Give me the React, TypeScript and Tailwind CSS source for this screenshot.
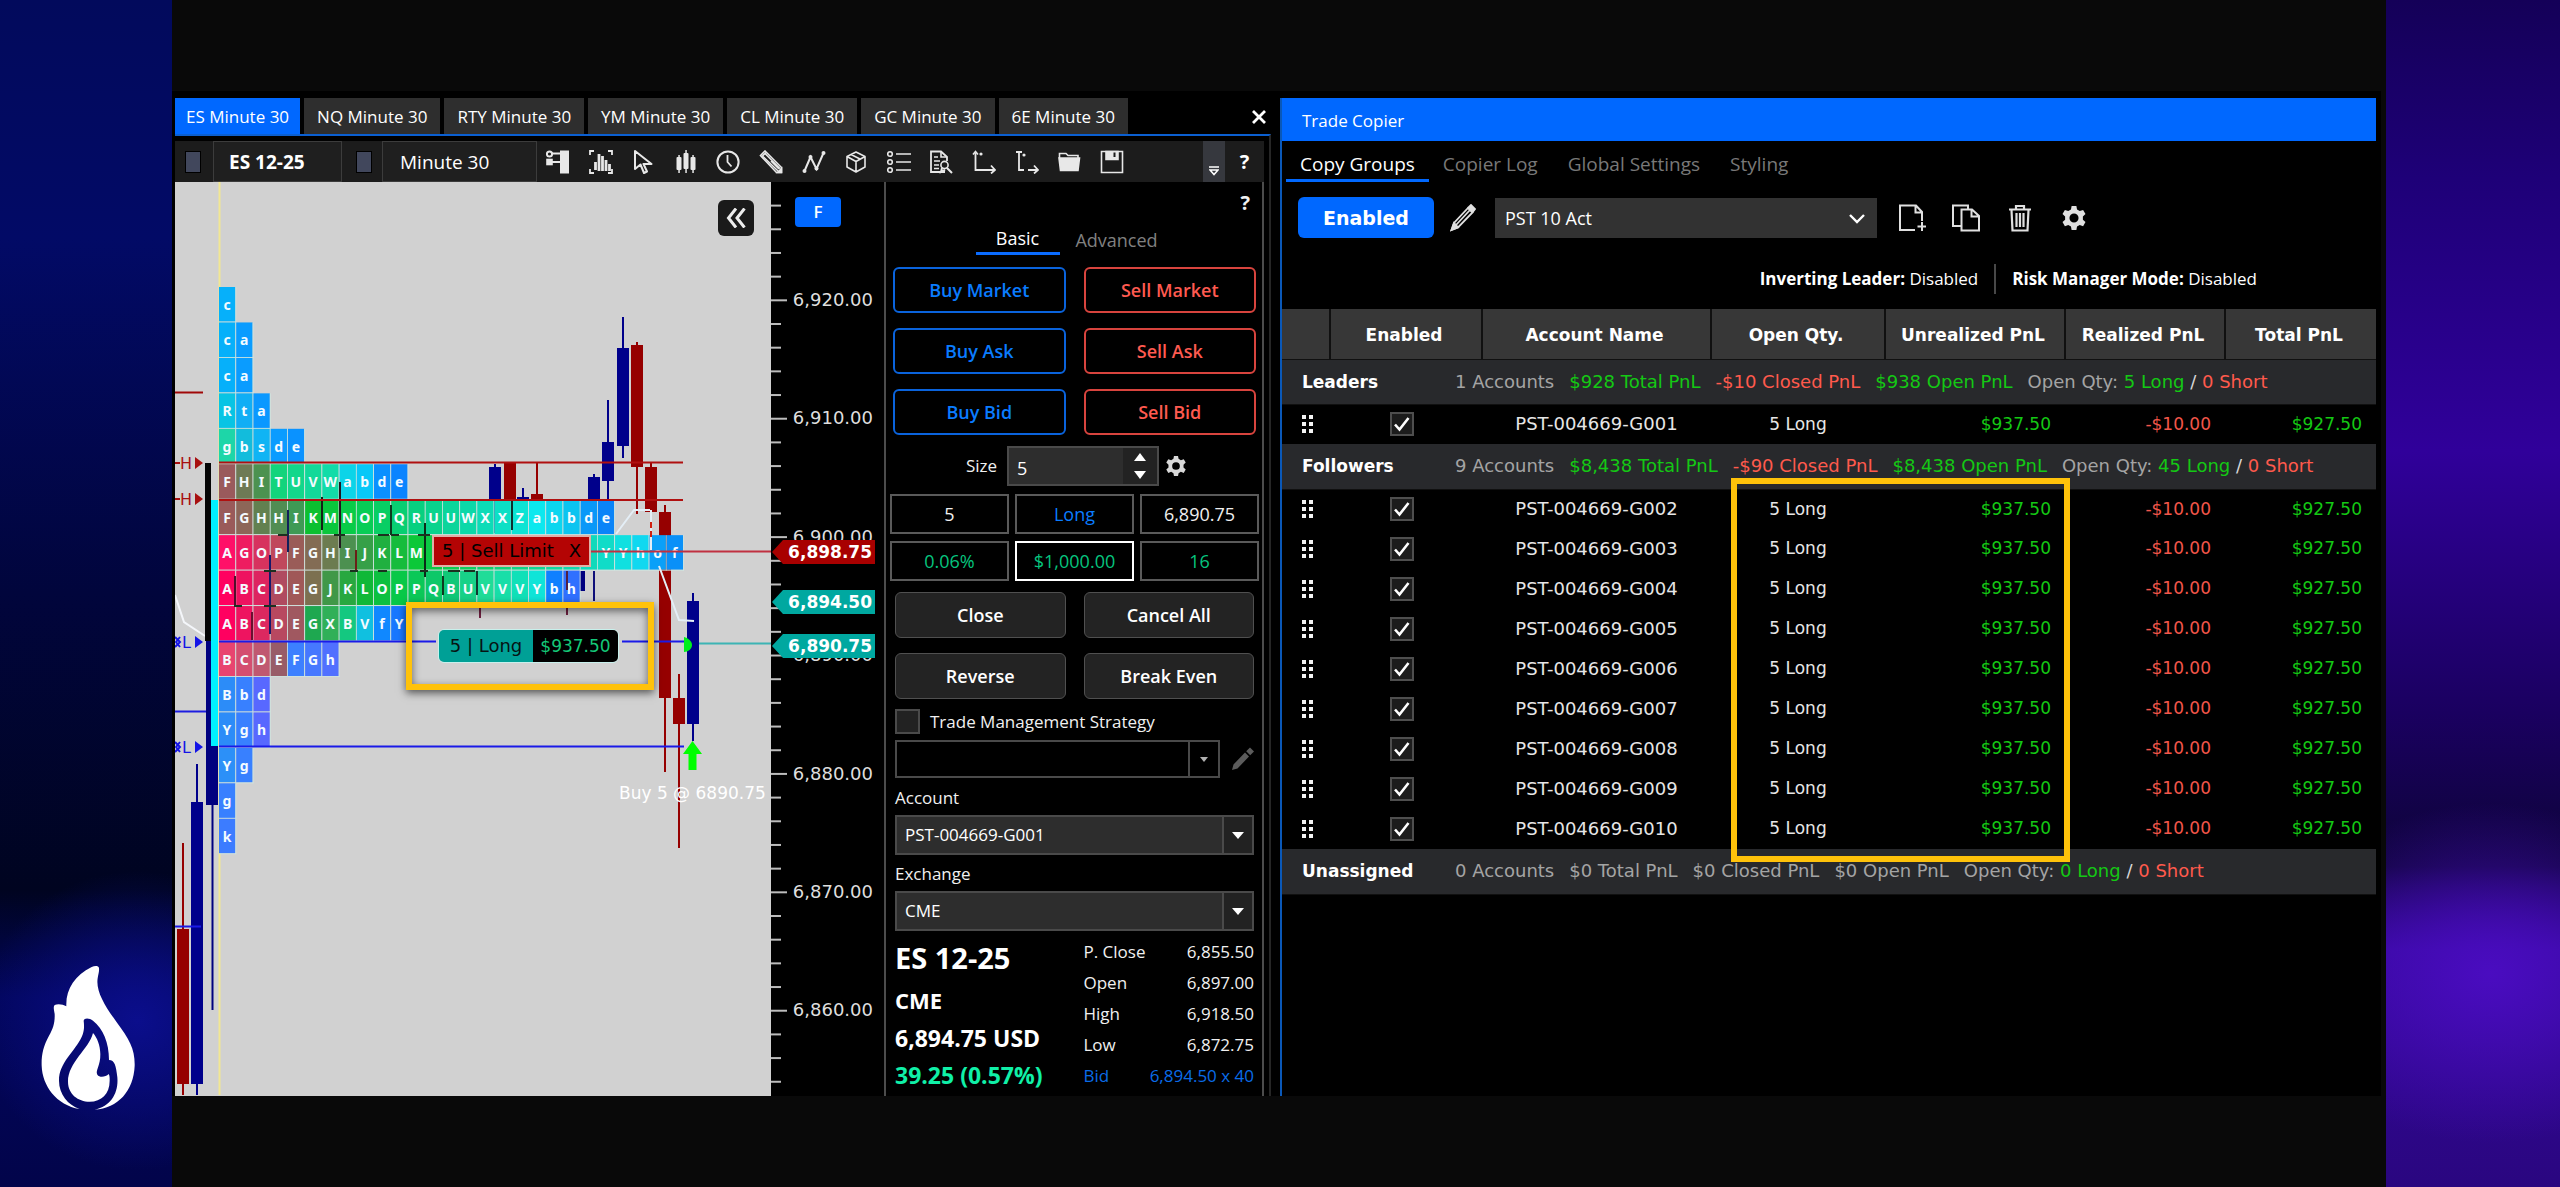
import type { ReactNode } from "react";

const TABS = ["ES Minute 30", "NQ Minute 30", "RTY Minute 30", "YM Minute 30", "CL Minute 30", "GC Minute 30", "6E Minute 30"];

/* ---------- market profile data ---------- */

type Row = { letters: string; stops: [number, string][] };

/* A blank in a row is a period whose letter the order label covers. */
const PROFILE: Row[] = [
  { letters: "c", stops: [[0, "#06b0fa"]] },
  { letters: "ca", stops: [[0, "#06b0fa"], [1, "#0a9cff"]] },
  { letters: "ca", stops: [[0, "#06b0fa"], [1, "#0a9cff"]] },
  { letters: "Rta", stops: [[0, "#08c4e4"], [1, "#10aef5"], [2, "#0a98ff"]] },
  { letters: "gbsde", stops: [[0, "#1dd6a8"], [1, "#12bcdc"], [2, "#10b4f4"], [3, "#0a9cff"], [4, "#0a92ff"]] },
  { letters: "FHITUVWabde", stops: [[0, "#9a5a5c"], [1, "#6e7a55"], [2, "#4c9250"], [3, "#12d47c"], [6, "#12dca8"], [7, "#0cd4e8"], [8, "#08c8f8"], [9, "#0a90ff"], [10, "#0a84ff"]] },
  { letters: "FGHHIKMNOPQRUUWXXZabbde", stops: [[0, "#9a5a5a"], [1, "#8d6658"], [2, "#628050"], [4, "#3f9a55"], [5, "#0cc030"], [7, "#08cc48"], [11, "#08d080"], [14, "#0cd8a8"], [17, "#0ce4d4"], [18, "#0ce8ee"], [20, "#0cc4f0"], [21, "#0a98f8"], [22, "#0a84f8"]] },
  { letters: "AGOPFGHIJKLM          YYhof", stops: [[0, "#ff1068"], [1, "#ee1c60"], [3, "#c0485c"], [4, "#9a5c58"], [6, "#6c7c50"], [7, "#4c9050"], [9, "#20b040"], [11, "#0cc838"], [22, "#10dcc8"], [23, "#10e0e0"], [24, "#10d8f0"], [25, "#0aa0f8"], [26, "#0a90f8"]] },
  { letters: "ABCDEGJKLOPPQBUVVVYbh", stops: [[0, "#ff0060"], [2, "#dd2460"], [3, "#b04a60"], [4, "#a05858"], [5, "#7c7050"], [6, "#409848"], [8, "#10b838"], [10, "#08c848"], [13, "#10c878"], [15, "#20dc98"], [17, "#10e0b8"], [18, "#10e4d8"], [19, "#1080ff"], [20, "#3070ff"]] },
  { letters: "ABCDEGXBVfY", stops: [[0, "#ff0060"], [2, "#dc2860"], [3, "#b84860"], [4, "#a05860"], [5, "#1ea850"], [6, "#30b058"], [7, "#14c880"], [8, "#10c0e0"], [9, "#1088ff"], [10, "#1878ff"]] },
  { letters: "BCDEFGh", stops: [[0, "#e84470"], [2, "#c05870"], [3, "#985c68"], [4, "#3c80ff"], [6, "#5070ff"]] },
  { letters: "Bbd", stops: [[0, "#2c8cf8"], [1, "#3880ff"], [2, "#5868ff"]] },
  { letters: "Ygh", stops: [[0, "#2c8cf8"], [1, "#3880ff"], [2, "#5868ff"]] },
  { letters: "Yg", stops: [[0, "#2c90f8"], [1, "#3880ff"]] },
  { letters: "g", stops: [[0, "#3880ff"]] },
  { letters: "k", stops: [[0, "#3c7cff"]] },
];

const channels = (hex: string) => [1, 3, 5].map((i) => parseInt(hex.slice(i, i + 2), 16));

function colorAt(stops: [number, string][], col: number) {
  let i = 0;
  while (i < stops.length - 1 && stops[i + 1][0] <= col) i++;
  if (i === stops.length - 1) return stops[i][1];
  const [a, ca] = stops[i];
  const [b, cb] = stops[i + 1];
  const t = (col - a) / (b - a);
  const x = channels(ca);
  const y = channels(cb);
  return `rgb(${x.map((v, k) => Math.round(v + (y[k] - v) * t)).join(",")})`;
}

/* x, wick top, body top, body bottom, wick bottom, up */
const CANDLES: [number, number, number, number, number, boolean][] = [
  [183, 843, 929, 1084, 1096, false],
  [197, 764, 802, 1084, 1096, true],
  [495, 464, 467, 499, 533, true],
  [510, 462, 463, 499, 500, false],
  [523, 488, 497, 500, 500, true],
  [537, 463, 494, 499, 500, false],
  [594, 474, 477, 499, 499, true],
  [608, 400, 442, 481, 499, true],
  [623, 317, 348, 446, 458, true],
  [637, 342, 345, 467, 514, false],
  [651, 463, 467, 512, 540, false],
  [665, 505, 512, 698, 772, false],
  [679, 674, 698, 724, 848, false],
  [693, 593, 601, 724, 741, true],
];

const TICKS: [number, number, number, string][] = [
  [340, 482, 548, "#221820"], [322, 497, 530, "#142018"], [288, 510, 552, "#12205a"], [270, 555, 634, "#16186a"],
  [391, 505, 535, "#0e3a20"], [425, 523, 577, "#0c2a18"], [512, 499, 530, "#0d3030"], [235, 576, 606, "#50102c"],
  [252, 612, 640, "#6a1030"], [356, 550, 571, "#6a2018"], [443, 576, 595, "#103820"], [477, 571, 595, "#103830"],
  [480, 608, 618, "#702040"], [567, 608, 615, "#702040"], [567, 571, 590, "#502040"], [594, 571, 601, "#10107a"],
];

const DASHES: [number, number, number][] = [
  [278, 288, 535], [334, 345, 535], [378, 389, 535], [391, 399, 535], [418, 430, 535], [264, 276, 571], [350, 358, 571],
  [378, 387, 571], [420, 428, 571], [448, 460, 571], [464, 475, 571], [234, 242, 606], [264, 276, 606],
];

function Chart() {
  return (
    <svg className="block" width="596" height="913" viewBox="175 182 596 913" role="img" aria-label="ES 12-25 price chart">
      <path d="M219.500 182V1095" stroke="#f2e793" strokeWidth="2" />
      <path d="M175 595L184 622L205 636" stroke="#f4f6fa" strokeWidth="2" fill="none" />
      <path d="M175 392.500H203" stroke="#a00808" strokeWidth="2" />
      <path d="M175 711.500H206" stroke="#1c1ce0" strokeWidth="2" />
      <rect x="205" y="463" width="6" height="178" fill="#050505" />
      <rect x="206" y="641" width="6" height="164" fill="#00007f" />
      <rect x="211" y="746" width="7" height="59" fill="#00007f" />
      <path d="M212.500 805V1010" stroke="#00007f" strokeWidth="2" />
      <rect x="211" y="500" width="7" height="246" fill="#00f0ff" />
      <rect x="580" y="571" width="5" height="20" fill="#00007f" />

      {CANDLES.map(([x, wt, bt, bb, wb, up]) => (
        <g key={x} fill={up ? "#00008b" : "#960000"}>
          <rect x={x - 1} y={wt} width="2" height={wb - wt} />
          <rect x={x - 6} y={bt} width="12" height={bb - bt} />
        </g>
      ))}
      <path d="M175 926.500H201" stroke="#1a1ae8" strokeWidth="2" />

      {PROFILE.map((row, r) =>
        row.letters.split("").map((ch, c) => {
          const x = 219 + c * 17.22;
          const y = 287 + r * 35.45;
          return (
            <g key={`${r}-${c}`}>
              <rect x={x} y={y} width="16.400" height="34.600" fill={colorAt(row.stops, c)} />
              <rect x={x + 16.4} y={y} width="0.820" height="35.450" fill="#cfe6e0" />
              <rect x={x} y={y + 34.6} width="17.220" height="0.850" fill="#cfe6e0" />
              {ch !== " " && (
                <text x={x + 8} y={y + 23} fill="#f4fbff" fontSize="14" fontWeight="700" textAnchor="middle" fontFamily="Noto Sans, sans-serif">
                  {ch}
                </text>
              )}
            </g>
          );
        }),
      )}

      {TICKS.map(([x, a, b, c]) => (
        <path key={`${x}-${a}`} d={`M${x} ${a}V${b}`} stroke={c} strokeWidth="2" />
      ))}
      {DASHES.map(([a, b, y]) => (
        <path key={`${a}-${y}`} d={`M${a} ${y}H${b}`} stroke="#1c3020" strokeWidth="2" />
      ))}

      <path d="M219 462.500H683M219 500H683" stroke="#b01010" strokeWidth="2" />
      <path d="M219 641.500H436M622 641.500H686M219 746.500H684" stroke="#1a1ae8" strokeWidth="2" />
      <path d="M616 534L634 510H650M659 566L679 620L694 621" stroke="#e4eef6" strokeWidth="2" fill="none" />
      <path d="M651 510V550" stroke="#e4eef6" strokeWidth="2" />
      <path d="M651 522V540" stroke="#d02010" strokeWidth="2" strokeDasharray="6 3" />
      <path d="M590 551.500H771" stroke="#c03040" strokeWidth="2" />
      <path d="M699 643.500H771" stroke="#3cb4b4" strokeWidth="2" />
      <path d="M684 637C688 638 692 641 692 645C692 649 688 652 684 652Z" fill="#00f01c" />
      <path d="M692.500 741L702 754H696.500V770H688.500V754H683Z" fill="#00ff00" />

      <g fill="#a81010">
        <path d="M175 463H180M175 499H180" stroke="#a81010" strokeWidth="2" />
        <path d="M195 457L203 463L195 469ZM195 493L203 499L195 505Z" />
        <g fontFamily="DejaVu Sans, sans-serif" fontSize="16">
          <text x="180" y="469">H</text>
          <text x="180" y="505">H</text>
        </g>
      </g>
      <g fill="#1414e6">
        <path d="M195 636L203 642L195 648ZM195 741L203 747L195 753Z" />
        <path d="M175 637L180 642L175 647M175 742L180 747L175 752M180 637L176 642L180 647M180 742L176 747L180 752" stroke="#1414e6" strokeWidth="2" fill="none" />
        <g fontFamily="DejaVu Sans, sans-serif" fontSize="16">
          <text x="182" y="648">L</text>
          <text x="182" y="753">L</text>
        </g>
      </g>
      <text x="619" y="799" fill="#ffffff" fontSize="17" fontFamily="DejaVu Sans, sans-serif">
        Buy 5 @ 6890.75
      </text>
    </svg>
  );
}

const FLAGS: [number, string, string][] = [
  [552, "6,898.75", "#a80000"],
  [602, "6,894.50", "#00a8a0"],
  [646, "6,890.75", "#00a8a0"],
];

function PriceAxis() {
  const ticks = Array.from({ length: 38 }, (_, i) => ({ y: 205.6 + i * 23.68, major: (i + 1) % 5 === 0 }));
  const labels = ["6,920.00", "6,910.00", "6,900.00", "6,890.00", "6,880.00", "6,870.00", "6,860.00"];
  return (
    <svg className="block" width="113" height="913" viewBox="771 182 113 913" role="img" aria-label="Price axis" fontFamily="DejaVu Sans, sans-serif">
      {ticks.map((t) => (
        <path key={t.y} d={`M771 ${t.y}H${t.major ? 787 : 781}`} stroke="#bdbdbd" strokeWidth="2" />
      ))}
      {labels.map((l, i) => (
        <text key={l} x="873" y={306 + i * 118.4} fill="#dedede" fontSize="18" textAnchor="end">
          {l}
        </text>
      ))}
      {FLAGS.map(([y, l, c]) => (
        <g key={l}>
          <path d={`M772 ${y}L783 ${y - 12}H875V${y + 12}H783Z`} fill={c} />
          <text x="872" y={y + 6} fill="#ffffff" fontSize="17" fontWeight="700" textAnchor="end">
            {l}
          </text>
        </g>
      ))}
    </svg>
  );
}

/* ---------- icons ---------- */

function Icon({ children, size = 24 }: { children: ReactNode; size?: number }) {
  return (
    <svg width={size} height={size} viewBox="0 0 24 24" fill="none" stroke="currentColor" strokeWidth="1.600" aria-hidden="true">
      {children}
    </svg>
  );
}

const TOOLS: { label: string; icon: ReactNode }[] = [
  {
    label: "Chart trader",
    icon: (
      <>
        <rect x="14" y="0.500" width="9" height="23" fill="currentColor" stroke="none" />
        <path d="M5 3.500H14M6 12H14" strokeWidth="2" />
        <circle cx="3.500" cy="4" r="2.600" strokeWidth="2" />
        <rect x="1" y="9.500" width="5" height="5" fill="currentColor" />
      </>
    ),
  },
  {
    label: "Market analyzer",
    icon: (
      <>
        <path d="M1 5V1H5M19 1H23V5M1 19V23H5M19 23H23V19" strokeWidth="1.800" />
        <path d="M6.500 12V20M10 4V21M13.500 6V21M17 10V21M20.500 14V21" strokeWidth="2.800" />
      </>
    ),
  },
  { label: "Cursor", icon: <path d="M4 1V19L9.500 14.500L13 23L16 21.500L12.500 14H20.500Z" strokeLinejoin="round" strokeWidth="2" /> },
  {
    label: "Chart style",
    icon: (
      <g stroke="none" fill="currentColor">
        <rect x="2.500" y="7" width="5" height="13" rx="1" />
        <rect x="4.300" y="5" width="1.500" height="18" />
        <rect x="9.500" y="3" width="5" height="16" rx="1" />
        <rect x="11.300" y="0" width="1.500" height="23" />
        <rect x="16.500" y="7" width="5" height="13" rx="1" />
        <rect x="18.300" y="5" width="1.500" height="18" />
      </g>
    ),
  },
  {
    label: "Time frame",
    icon: (
      <>
        <circle cx="12" cy="12" r="10.600" strokeWidth="2" />
        <path d="M11.500 5V12L15.500 16.500" strokeWidth="1.800" />
      </>
    ),
  },
  {
    label: "Drawing tools",
    icon: (
      <>
        <path d="M1.500 5.500L6 1L22.500 17.500V22.500H17.500Z" />
        <path d="M4 6.500L19 21M6.500 4L21 18.500M3 6.500L7 2.500M12 11L20 19" />
        <path d="M18.500 22.500H22.500V18.500Z" fill="currentColor" />
      </>
    ),
  },
  {
    label: "Indicators",
    icon: (
      <>
        <path d="M2.500 21L8.500 7L14.500 19L21.500 3" strokeWidth="2" />
        <g fill="currentColor" stroke="none">
          <circle cx="2.500" cy="21" r="2" />
          <circle cx="8.500" cy="7" r="2" />
          <circle cx="14.500" cy="18.500" r="2" />
          <circle cx="21.500" cy="3" r="2" />
        </g>
      </>
    ),
  },
  {
    label: "Strategies",
    icon: <path d="M12 2L21 6.500V17L12 22L3 17V6.500ZM3 6.500L12 11.500L21 6.500M12 11.500V22M7 4.500L16 9" strokeLinejoin="round" />,
  },
  {
    label: "Data series",
    icon: (
      <>
        <circle cx="3" cy="4" r="2.300" />
        <circle cx="3" cy="12" r="2.300" />
        <circle cx="3" cy="20" r="2.300" />
        <path d="M9 4H24M9 12H24M9 20H24" />
      </>
    ),
  },
  {
    label: "Data box",
    icon: (
      <>
        <path d="M16 22H2V1.500H12L18 7V11" strokeWidth="1.800" />
        <path d="M12 1.500V7H18M5 7H9M5 11H11M5 15H10M5 18.500H10" />
        <circle cx="15.500" cy="15" r="3.600" />
        <path d="M18 18L23 23M13 18L12 22L16 20" strokeWidth="2" />
      </>
    ),
  },
  {
    label: "Scroll lock",
    icon: (
      <>
        <path d="M3.500 3V20H23M19 15.500L23 20L19 23.500" strokeWidth="1.800" />
        <path d="M1 4.500L3.500 1.500L6 4.500" />
        <circle cx="9" cy="4" r="0.800" fill="currentColor" />
      </>
    ),
  },
  {
    label: "Auto scale",
    icon: (
      <>
        <path d="M4 2V20H9M13 20H23M19 15.500L23 20L19 23.500M1 2H7" strokeWidth="1.800" />
        <circle cx="9" cy="5" r="0.800" fill="currentColor" />
      </>
    ),
  },
  {
    label: "Open workspace",
    icon: (
      <>
        <path d="M2.500 8V3.500H9L11 5.500H21V8" />
        <path d="M2 8H22.500L21 20.500H3.500Z" fill="currentColor" />
      </>
    ),
  },
  {
    label: "Save",
    icon: (
      <>
        <path d="M1.500 1.500H22.500V22.500H1.500Z" />
        <path d="M6 1.500H18V9.500H6Z" fill="currentColor" />
        <path d="M14.500 2.500V7" stroke="#1c1c1c" strokeWidth="2" />
      </>
    ),
  },
];

function Gear({ size }: { size: number }) {
  return (
    <svg width={size} height={size} viewBox="0 0 24 24" fill="currentColor" fillRule="evenodd" aria-hidden="true">
      <path d="M9.800 1H14.200L14.800 4.200L17.300 5.600L20.400 4.500L22.600 8.300L20.200 10.500V13.500L22.600 15.700L20.400 19.500L17.300 18.400L14.800 19.800L14.200 23H9.800L9.200 19.800L6.700 18.400L3.600 19.500L1.400 15.700L3.800 13.500V10.500L1.400 8.300L3.600 4.500L6.700 5.600L9.200 4.200ZM12 7.800A4.200 4.200 0 1 0 12 16.200A4.200 4.200 0 1 0 12 7.800Z" />
    </svg>
  );
}

function Flame() {
  return (
    <svg className="block" width="94" height="146" viewBox="124 199 282 436" fill="#ffffff" role="img" aria-label="Flame logo">
      <path d="M298 207C296 199 285 200 276 204C225 230 198 270 200 322C190 316 175 314 165 318C160 323 163 332 165 345C166 372 160 390 148 410C130 442 125 470 126 500C128 560 170 618 240 630C205 618 178 585 178 545C178 490 225 460 247 412C254 394 254 382 252 365C254 355 270 357 280 365C310 388 328 430 328 483C345 483 349 500 353 535C357 580 335 622 285 632C355 628 402 575 405 500C406 450 390 422 350 368C315 320 288 275 294 238C296 224 299 218 298 207Z" />
      <path d="M280 402C268 450 205 490 205 548C205 585 235 608 270 608C305 608 330 585 330 545C330 535 330 530 327 525C318 534 300 537 293 527C286 515 303 500 302 465C302 440 292 415 280 402Z" />
    </svg>
  );
}

/* ---------- order panel ---------- */

const OUTLINE_BLUE = "h-[46px] rounded-md border-2 border-[#0a63dc] text-lg font-semibold text-[#0a7cff]";
const OUTLINE_RED = "h-[46px] rounded-md border-2 border-[#d8443e] text-lg font-semibold text-[#ff5a50]";
const GREY_BUTTON = "h-[46px] rounded-md border border-[#505050] bg-[#232323] text-lg font-semibold text-white";
const STAT = "flex h-10 items-center justify-center border-2 text-lg";

function Dropdown({ id, label, value, dark, className }: { id: string; label?: string; value?: string; dark?: boolean; className: string }) {
  return (
    <div className={`relative ${className}`}>
      <select id={id} aria-label={label} className={`h-full w-full appearance-none border-2 border-[#4a4a4a] px-2 text-[17px] text-white ${dark ? "bg-black" : "bg-[#2d2d2d]"}`}>
        {value && <option>{value}</option>}
      </select>
      <span className={`pointer-events-none absolute inset-y-0.5 right-0.5 flex w-[30px] items-center justify-center border-l-2 border-[#4a4a4a] ${dark ? "bg-black text-[#b0b0b0]" : "bg-[#222222] text-white"}`}>
        <svg width="12" height="7" viewBox="0 0 12 7" fill="currentColor" aria-hidden="true">
          <path d={dark ? "M2 1H10L6 6Z" : "M0 0H12L6 7Z"} />
        </svg>
      </span>
    </div>
  );
}

const QUOTES = [
  ["P. Close", "6,855.50"],
  ["Open", "6,897.00"],
  ["High", "6,918.50"],
  ["Low", "6,872.75"],
  ["Bid", "6,894.50 x 40"],
];

function OrderPanel() {
  return (
    <section className="flex w-[380px] shrink-0 flex-col border-x-2 border-[#4c4c4c] bg-black pl-px text-[17px] text-[#f0f0f0]">
      <div className="flex h-[42px] items-center justify-end pr-3">
        <button className="text-xl font-bold" aria-label="Order panel help">?</button>
      </div>
      <div className="flex h-[31px] justify-center text-lg">
        <button className="w-[84px] border-b-[3px] border-[#0a6cff] leading-7 text-white">Basic</button>
        <button className="w-[114px] leading-8 text-[#808080]">Advanced</button>
      </div>
      <div className="mx-1.5 mt-3 grid grid-cols-2 gap-x-[18px] gap-y-[15px]">
        <button className={OUTLINE_BLUE}>Buy Market</button>
        <button className={OUTLINE_RED}>Sell Market</button>
        <button className={OUTLINE_BLUE}>Buy Ask</button>
        <button className={OUTLINE_RED}>Sell Ask</button>
        <button className={OUTLINE_BLUE}>Buy Bid</button>
        <button className={OUTLINE_RED}>Sell Bid</button>
      </div>
      <div className="mt-[11px] flex items-center justify-center gap-1.5 pl-1">
        <label htmlFor="size" className="pr-1">Size</label>
        <div className="flex h-10 w-[152px] border-2 border-[#4a4a4a] bg-[#2d2d2d]">
          <input id="size" defaultValue="5" className="min-w-0 flex-1 bg-transparent px-2 pt-1 text-lg text-white" />
          <div className="flex w-[34px] flex-col items-center justify-center gap-2.5 bg-[#222222] text-white">
            <button aria-label="Increase size">
              <svg className="block" width="12" height="8" viewBox="0 0 12 8" fill="currentColor"><path d="M6 0L12 8H0Z" /></svg>
            </button>
            <button aria-label="Decrease size">
              <svg className="block" width="12" height="8" viewBox="0 0 12 8" fill="currentColor"><path d="M0 0H12L6 8Z" /></svg>
            </button>
          </div>
        </div>
        <button aria-label="Size settings" className="text-[#d8d8d8]"><Gear size={22} /></button>
      </div>
      <div className="mx-[3px] mt-2 grid grid-cols-3 gap-x-1.5 gap-y-[7px]">
        <div className={`${STAT} border-[#5a5a5a]`}>5</div>
        <div className={`${STAT} border-[#5a5a5a] text-[#0a7cff]`}>Long</div>
        <div className={`${STAT} border-[#5a5a5a]`}>6,890.75</div>
        <div className={`${STAT} border-[#5a5a5a] text-[#06c47e]`}>0.06%</div>
        <div className={`${STAT} border-white text-[#06c47e]`}>$1,000.00</div>
        <div className={`${STAT} border-[#5a5a5a] text-[#06c47e]`}>16</div>
      </div>
      <div className="mx-2 mt-[11px] grid grid-cols-2 gap-x-[18px] gap-y-[15px]">
        <button className={GREY_BUTTON}>Close</button>
        <button className={GREY_BUTTON}>Cancel All</button>
        <button className={GREY_BUTTON}>Reverse</button>
        <button className={GREY_BUTTON}>Break Even</button>
      </div>
      <div className="mx-2 mt-2.5 flex h-[25px] items-center gap-2.5">
        <input id="tms" type="checkbox" className="size-[25px] appearance-none border-2 border-[#4a4a4a] bg-[#222222]" />
        <label htmlFor="tms">Trade Management Strategy</label>
      </div>
      <div className="mx-2 mt-1.5 flex h-[38px] items-center gap-3">
        <Dropdown id="strategy" label="Strategy" dark className="h-full flex-1" />
        <button aria-label="Edit strategy" className="text-[#5c5c5c]">
          <svg width="22" height="24" viewBox="0 0 22 24" fill="currentColor" aria-hidden="true">
            <path d="M0 23L1.500 17.500L13 5.500L17 9.500L5.500 21.500ZM14.200 4.200L18 0.500L22 4.500L18.200 8.200Z" />
          </svg>
        </button>
      </div>
      <label htmlFor="account" className="mx-2 mt-2 leading-6">Account</label>
      <Dropdown id="account" value="PST-004669-G001" className="mx-2 mt-[5px] h-10" />
      <label htmlFor="exchange" className="mx-2 mt-[7px] leading-6">Exchange</label>
      <Dropdown id="exchange" value="CME" className="mx-2 mt-[5px] h-10" />
      <div className="mx-2 grid grid-cols-2 gap-x-[18px]">
        <div className="mt-[7px] font-bold whitespace-nowrap text-white">
          <h2 className="text-[29px] leading-10">ES 12-25</h2>
          <p className="text-[22px] leading-[44px]">CME</p>
          <p className="text-[23px] leading-8">6,894.75 USD</p>
          <p className="text-[23px] leading-[42px] text-[#10f0a8]">39.25 (0.57%)</p>
        </div>
        <dl className="mt-[5px] leading-[31px]">
          {QUOTES.map(([k, v]) => (
            <div key={k} className={`flex justify-between ${k === "Bid" ? "text-[#0a6ce8]" : ""}`}>
              <dt>{k}</dt>
              <dd>{v}</dd>
            </div>
          ))}
        </dl>
      </div>
    </section>
  );
}

/* ---------- chart window ---------- */

function ChartWindow() {
  return (
    <section className="flex min-w-0 flex-col">
      <nav className="flex h-9 items-stretch gap-1 text-[17px] whitespace-nowrap text-white" aria-label="Charts">
        {TABS.map((t, i) => (
          <button key={t} className={i === 0 ? "bg-[#0068ff] px-[11px] pt-0.5" : "bg-[#2e2e2e] px-[13px] pt-0.5"}>
            {t}
          </button>
        ))}
        <button aria-label="Close window" className="mr-1 ml-auto pt-0.5">
          <svg width="16" height="16" viewBox="0 0 16 16" stroke="#ffffff" strokeWidth="2.800"><path d="M2 2L14 14M14 2L2 14" /></svg>
        </button>
      </nav>
      <div className="flex flex-1 flex-col border-t-2 border-r-2 border-t-[#0b5fd0] border-r-[#262626] pr-[5px]">
        <div className="mt-[5px] flex h-[41px] items-center bg-[#1c1c1c] text-[19px] text-white">
          <span className="ml-2.5 h-[22px] w-4 border border-black bg-[#41475c]" />
          <input aria-label="Instrument" defaultValue="ES 12-25" className="ml-3 h-full w-[129px] border border-[#3c3c3c] bg-[#1f1f1f] px-[15px] font-bold" />
          <span className="ml-3.5 h-[22px] w-4 border border-black bg-[#41475c]" />
          <input aria-label="Interval" defaultValue="Minute 30" className="ml-2.5 h-full w-[155px] border border-[#3c3c3c] bg-[#1f1f1f] px-[17px]" />
          <div className="ml-[9px] flex w-[578px] justify-between text-[#e8e8e8]">
            {TOOLS.map((t) => (
              <button key={t.label} aria-label={t.label}>
                <Icon>{t.icon}</Icon>
              </button>
            ))}
          </div>
          <button aria-label="More tools" className="ml-auto flex h-full w-[22px] items-end justify-center bg-[#36383e] pb-1.5">
            <svg width="10" height="10" viewBox="0 0 10 10" fill="none" stroke="#ffffff" strokeWidth="1.600"><path d="M0 1H10M1 4H9L5 8.500Z" /></svg>
          </button>
          <button aria-label="Chart help" className="w-[39px] text-xl font-bold">?</button>
        </div>
        <div className="flex flex-1">
          <div className="relative min-w-0 flex-1 overflow-hidden bg-[#d1d1d1]">
            <Chart />
            <button aria-label="Collapse panel" className="absolute top-[18px] right-[17px] flex size-9 items-center justify-center rounded-md bg-[#1a1a1a]">
              <svg width="20" height="20" viewBox="0 0 20 20" fill="none" stroke="#ececec" strokeWidth="3"><path d="M10 0.500L2.500 10L10 19.500M18.500 0.500L11 10L18.500 19.500" /></svg>
            </button>
            <div className="absolute top-[353px] left-[257px] flex h-[32px] w-[159px] items-center justify-between border-2 border-[#e0b0a8] bg-[#b40404] px-2 font-['DejaVu_Sans',sans-serif] text-lg whitespace-nowrap text-black">
              <span>5 | Sell Limit</span>
              <button aria-label="Cancel order">X</button>
            </div>
            <div className="absolute top-[420px] left-[231px] flex h-[88px] w-[248px] items-center border-6 border-[#ffc20a] pl-[26px] shadow-[0_3px_8px_rgba(0,0,0,0.6),inset_0_3px_8px_rgba(0,0,0,0.55)]">
              <div className="flex h-[34px] w-[181px] overflow-hidden rounded-md border border-[#c8f0ec] font-['DejaVu_Sans',sans-serif] text-lg leading-8 whitespace-nowrap">
                <span className="w-[94px] bg-[#00a096] text-center text-[#061414]">5 | Long</span>
                <span className="flex-1 bg-black text-center text-[17px] text-[#14c878]">$937.50</span>
              </div>
            </div>
          </div>
          <div className="relative w-[113px] shrink-0">
            <PriceAxis />
            <button className="absolute top-[15px] left-6 h-[30px] w-[46px] rounded bg-[#0068ff] text-[17px] font-semibold text-white">F</button>
          </div>
          <OrderPanel />
        </div>
      </div>
    </section>
  );
}

/* ---------- trade copier ---------- */

const FOLLOWERS = ["G002", "G003", "G004", "G005", "G006", "G007", "G008", "G009", "G010"];

function GroupRow({ name, accounts, total, closed, open, long, idle }: { name: string; accounts: number; total: string; closed: string; open: string; long: number; idle?: boolean }) {
  const up = idle ? "text-[#a4a4a4]" : "text-[#14c814]";
  const down = idle ? "text-[#a4a4a4]" : "text-[#ff5a4c]";
  return (
    <tr className="h-[45px] border-b border-[#101010] bg-[#28292c]">
      <th colSpan={7} scope="rowgroup" className="px-5 text-left font-normal">
        <div className="flex items-baseline gap-[15px] text-lg whitespace-nowrap text-[#a4a4a4]">
          <span className="w-[138px] text-[17px] font-bold text-white">{name}</span>
          <span>{accounts} Accounts</span>
          <span className={up}>{total} Total PnL</span>
          <span className={down}>{closed} Closed PnL</span>
          <span className={up}>{open} Open PnL</span>
          <span>
            Open Qty: <span className="text-[#14c814]">{long} Long</span> <span className="text-[#d8d8d8]">/</span> <span className="text-[#ff5a4c]">0 Short</span>
          </span>
        </div>
      </th>
    </tr>
  );
}

function AccountRow({ code }: { code: string }) {
  const name = `PST-004669-${code}`;
  return (
    <tr className="h-10 text-[#e6e6e6]">
      <td className="pl-5">
        <svg width="11" height="18" viewBox="0 0 11 18" fill="#f4f4f4" aria-hidden="true">
          <path d="M0 0H4V4H0ZM7 0H11V4H7ZM0 7H4V11H0ZM7 7H11V11H7ZM0 14H4V18H0ZM7 14H11V18H7Z" />
        </svg>
      </td>
      <td className="pr-2">
        <span className="relative mx-auto block size-6">
          <input type="checkbox" defaultChecked aria-label={`Enable ${name}`} className="block size-6 appearance-none border-2 border-[#4e4e4e] bg-[#1c1c1c]" />
          <svg className="pointer-events-none absolute inset-0" width="24" height="24" viewBox="0 0 24 24" fill="none" stroke="#ffffff" strokeWidth="2.600" aria-hidden="true">
            <path d="M5 12.500L9.500 17.500L18.500 6" />
          </svg>
        </span>
      </td>
      <td className="text-center text-lg">{name}</td>
      <td className="text-center">5 Long</td>
      <td className="pr-3.5 text-right text-[#14c814]">$937.50</td>
      <td className="pr-3.5 text-right text-[#f2564a]">-$10.00</td>
      <td className="pr-3.5 text-right text-[#14c814]">$927.50</td>
    </tr>
  );
}

function TradeCopier() {
  return (
    <section className="flex min-w-0 flex-col border-l-2 border-[#0a58b8] bg-black text-white">
      <h1 className="flex h-[43px] items-center bg-[#0068ff] pt-0.5 pl-5 text-[17px]">Trade Copier</h1>
      <nav className="ml-1 flex h-[41px] pt-2 text-[19px] leading-[30px] text-[#787878]" aria-label="Trade copier">
        <button className="border-b-[3px] border-[#0068ff] px-3.5 text-white">Copy Groups</button>
        <button className="pr-4 pb-[3px] pl-3.5">Copier Log</button>
        <button className="pr-4 pb-[3px] pl-3.5">Global Settings</button>
        <button className="pr-4 pb-[3px] pl-3.5">Styling</button>
      </nav>
      <div className="mt-[15px] flex h-[41px] items-center pl-4 text-[#e0e0e0]">
        <button className="h-full w-[136px] rounded-md bg-[#0068ff] pt-px font-['DejaVu_Sans',sans-serif] text-[19px] font-bold text-white">Enabled</button>
        <button aria-label="Rename group" className="ml-4">
          <svg className="block" width="26" height="28" viewBox="0 0 26 28" fill="none" stroke="currentColor" strokeWidth="1.800" aria-hidden="true">
            <path d="M1.500 26L4 19L18 4L22.500 8.500L8 23.500ZM6 21L19.500 6.500" />
            <path d="M18.500 3.500L21 1L25 5L22.800 7.800Z" fill="currentColor" />
            <path d="M1.500 26L4 19L8 23.500Z" fill="currentColor" />
          </svg>
        </button>
        <div className="relative ml-[19px] h-10 w-[382px]">
          <select aria-label="Copy group" className="h-full w-full appearance-none bg-[#323232] px-2.5 text-lg text-white">
            <option>PST 10 Act</option>
          </select>
          <svg className="pointer-events-none absolute top-4 right-3" width="16" height="10" viewBox="0 0 16 10" fill="none" stroke="#ffffff" strokeWidth="2.400" aria-hidden="true">
            <path d="M1 1L8 8L15 1" />
          </svg>
        </div>
        <div className="ml-[21px] flex gap-[26px]">
          <button aria-label="New group">
            <svg width="28" height="28" viewBox="0 0 28 28" fill="none" stroke="currentColor" strokeWidth="2" aria-hidden="true">
              <path d="M17 26H2V1.500H18L24 8V17M17.500 1.500V8.500H24M24 18V27M19.500 22.500H28.500" />
            </svg>
          </button>
          <button aria-label="Duplicate group">
            <svg width="28" height="28" viewBox="0 0 28 28" fill="none" stroke="currentColor" strokeWidth="2" aria-hidden="true">
              <path d="M9 22H1V1.500H16V5M9.500 5.500H20L27 12V26.500H9.500ZM19.500 5.500V12.500H27" />
            </svg>
          </button>
          <button aria-label="Delete group">
            <svg width="28" height="28" viewBox="0 0 28 28" fill="none" stroke="currentColor" strokeWidth="2.200" aria-hidden="true">
              <path d="M3 5.500H25M10 5V2H18V5M5.500 6L6.500 26.500H21.500L22.500 6M10.500 9V23M14 9V23M17.500 9V23" />
            </svg>
          </button>
          <button aria-label="Group settings" className="flex size-7 items-center justify-center">
            <Gear size={26} />
          </button>
        </div>
      </div>
      <div className="mt-[26px] mb-[15px] flex h-[30px] items-center justify-end gap-4 pr-[119px] text-[17px]">
        <p><b>Inverting Leader:</b> Disabled</p>
        <span className="h-full w-0.5 bg-[#484848]" />
        <p><b>Risk Manager Mode:</b> Disabled</p>
      </div>
      <div className="relative">
        <table className="w-full table-fixed border-collapse font-['DejaVu_Sans',sans-serif] text-[17px] whitespace-nowrap">
          <colgroup>
            <col className="w-[48px]" />
            <col className="w-[152px]" />
            <col className="w-[229px]" />
            <col className="w-[174px]" />
            <col className="w-[180px]" />
            <col className="w-[160px]" />
            <col className="w-[151px]" />
          </colgroup>
          <thead>
            <tr className="h-[50px] border-b border-[#101010] bg-[#373737]">
              {["", "Enabled", "Account Name", "Open Qty.", "Unrealized PnL", "Realized PnL", "Total PnL"].map((h) => (
                <th key={h} scope="col" className="border-r-2 border-[#101010] pt-[3px] pr-1 last:border-r-0">{h}</th>
              ))}
            </tr>
          </thead>
          <tbody>
            <GroupRow name="Leaders" accounts={1} total="$928" closed="-$10" open="$938" long={5} />
            <AccountRow code="G001" />
            <GroupRow name="Followers" accounts={9} total="$8,438" closed="-$90" open="$8,438" long={45} />
            {FOLLOWERS.map((c) => <AccountRow key={c} code={c} />)}
            <GroupRow name="Unassigned" accounts={0} total="$0" closed="$0" open="$0" long={0} idle />
          </tbody>
        </table>
        <div className="pointer-events-none absolute top-[169px] right-[306px] h-[384px] w-[339px] border-6 border-[#ffc20a]" />
      </div>
    </section>
  );
}

export default function App() {
  return (
    <div className="flex min-h-screen bg-[#090909] font-['Open_Sans',sans-serif]">
      <aside className="flex w-[172px] shrink-0 flex-col justify-end bg-[radial-gradient(160px_150px_at_80%_86%,#0b0e8c_0%,transparent_100%),linear-gradient(180deg,#020a5c_0%,#020a66_20%,#01053c_50%,#000420_75%,#02065c_84%,#02044a_100%)] pb-[76px] pl-[41px]">
        <Flame />
      </aside>
      <main className="min-w-0 flex-1 pt-[91px] pr-[5px]">
        <div className="grid grid-cols-2 gap-[9px] bg-black pt-[7px] pr-[5px] pl-[3px]">
          <ChartWindow />
          <TradeCopier />
        </div>
      </main>
      <aside className="w-[174px] shrink-0 bg-[radial-gradient(220px_170px_at_60%_82%,#4a0cc0_0%,transparent_100%),linear-gradient(180deg,#140058_0%,#1e0078_15%,#30009a_38%,#1a0060_60%,#0d0438_73%,#34089a_80%,#2a0680_100%)]" />
    </div>
  );
}
